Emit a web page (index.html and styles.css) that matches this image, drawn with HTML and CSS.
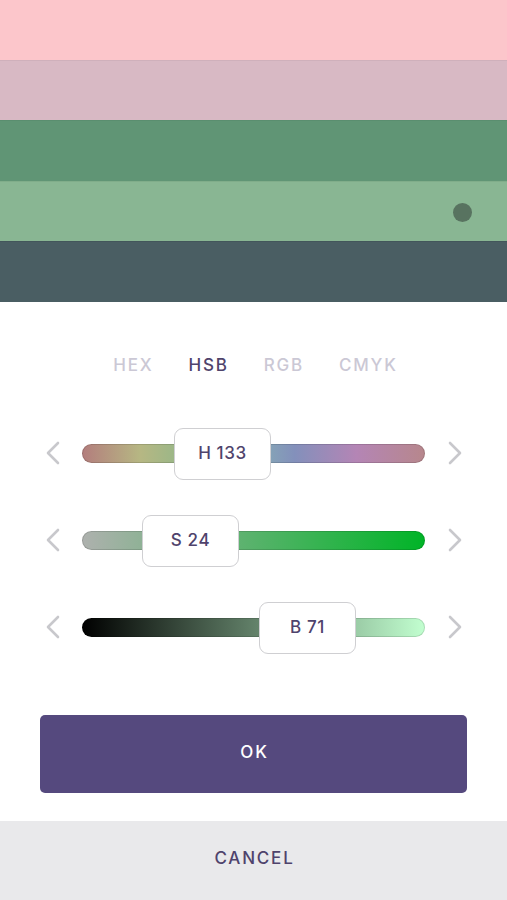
FILE: index.html
```html
<!DOCTYPE html>
<html>
<head>
<meta charset="utf-8">
<link rel="stylesheet" href="styles.css">
</head>
<body>
<div class="app">
  <div class="stripes">
    <div class="stripe s1"></div>
    <div class="stripe s2"></div>
    <div class="stripe s3"></div>
    <div class="stripe s4"><span class="dot"></span></div>
    <div class="stripe s5"></div>
  </div>
  <div class="panel">
    <nav class="tabs">
      <span class="tab">HEX</span>
      <span class="tab active">HSB</span>
      <span class="tab">RGB</span>
      <span class="tab">CMYK</span>
    </nav>
    <div class="sliders">
      <div class="row">
        <svg class="chev" viewBox="0 0 15 24"><path d="M13 2 L3 12 L13 22"/></svg>
        <div class="track hue"><div class="thumb" style="left:91px">H 133</div></div>
        <svg class="chev" viewBox="0 0 15 24"><path d="M2 2 L12 12 L2 22"/></svg>
      </div>
      <div class="row">
        <svg class="chev" viewBox="0 0 15 24"><path d="M13 2 L3 12 L13 22"/></svg>
        <div class="track sat"><div class="thumb" style="left:59px">S 24</div></div>
        <svg class="chev" viewBox="0 0 15 24"><path d="M2 2 L12 12 L2 22"/></svg>
      </div>
      <div class="row">
        <svg class="chev" viewBox="0 0 15 24"><path d="M13 2 L3 12 L13 22"/></svg>
        <div class="track bri"><div class="thumb" style="left:176px">B 71</div></div>
        <svg class="chev" viewBox="0 0 15 24"><path d="M2 2 L12 12 L2 22"/></svg>
      </div>
    </div>
    <button class="ok">OK</button>
  </div>
  <button class="cancel">CANCEL</button>
</div>
</body>
</html>
```
FILE: styles.css
```css
* { box-sizing: border-box; }
html, body { margin: 0; padding: 0; background: #fff; }
body { font-family: "Inter", "Open Sans", sans-serif; }
.app { width: 507px; height: 900px; display: flex; flex-direction: column; }
.stripes { display: flex; flex-direction: column; height: 302px; }
.stripe { flex: 1; position: relative; }
.s1 { background: #fcc6cb; }
.s2 { background: #d8b9c4; border-top: 1px solid #cfb0bb; }
.s3 { background: #609575; border-top: 1px solid #5a8e6f; }
.s4 { background: #89b693; border-top: 1px solid #80ad8a; }
.s5 { background: #4a5e63; border-top: 1px solid #43565b; }
.dot { position: absolute; left: 453px; top: 21px; width: 19px; height: 19px; border-radius: 50%; background: #587360; }
.panel { flex: 1; display: flex; flex-direction: column; align-items: center; }
.tabs { display: flex; gap: 35px; margin-top: 51px; height: 24px; align-items: center; padding-left: 4px; }
.tab { font-size: 17px; letter-spacing: 1.8px; color: #cbc8d5; font-weight: 500; }
.tab.active { color: #4f436c; }
.sliders { display: flex; flex-direction: column; gap: 35px; margin-top: 50px; width: 100%; }
.row { display: flex; align-items: center; height: 52px; padding-left: 45px; }
.chev { width: 15px; height: 24px; fill: none; stroke: #c8c8cc; stroke-width: 2.6; stroke-linecap: round; stroke-linejoin: round; }
.track { position: relative; width: 343px; height: 19px; border-radius: 10px; margin: 0 23px 0 22px; border: 1px solid rgba(0,0,0,0.13); background-origin: border-box; }
.hue { background-image: linear-gradient(to right, #b37d7d 0%, #b6b783 17%, #8db78a 33%, #87b3b3 48%, #8390bb 62%, #b485b5 80%, #b7878c 100%); }
.sat { background-image: linear-gradient(to right, #aeb1ae 0%, #00b427 100%); }
.bri { background-image: linear-gradient(to right, #000 0%, #c2ffd0 100%); }
.thumb { position: absolute; top: -17px; width: 97px; height: 52px; border: 1.5px solid #cfcfd2; border-radius: 9px; background: #fff; display: flex; align-items: center; justify-content: center; font-size: 17px; font-weight: 500; color: #4f436c; letter-spacing: 0.6px; padding-bottom: 1px; }
.ok { margin-top: 62px; width: 427px; height: 78px; border: none; border-radius: 5px; background: #55497e; color: #fff; font-family: inherit; font-size: 17px; font-weight: 500; letter-spacing: 1.8px; padding: 0 0 4px 2px; }
.cancel { height: 79px; border: none; background: #e9e9eb; color: #4f436c; font-family: inherit; font-size: 17px; font-weight: 500; letter-spacing: 1.8px; width: 100%; padding: 0 0 5px 2px; }
```
